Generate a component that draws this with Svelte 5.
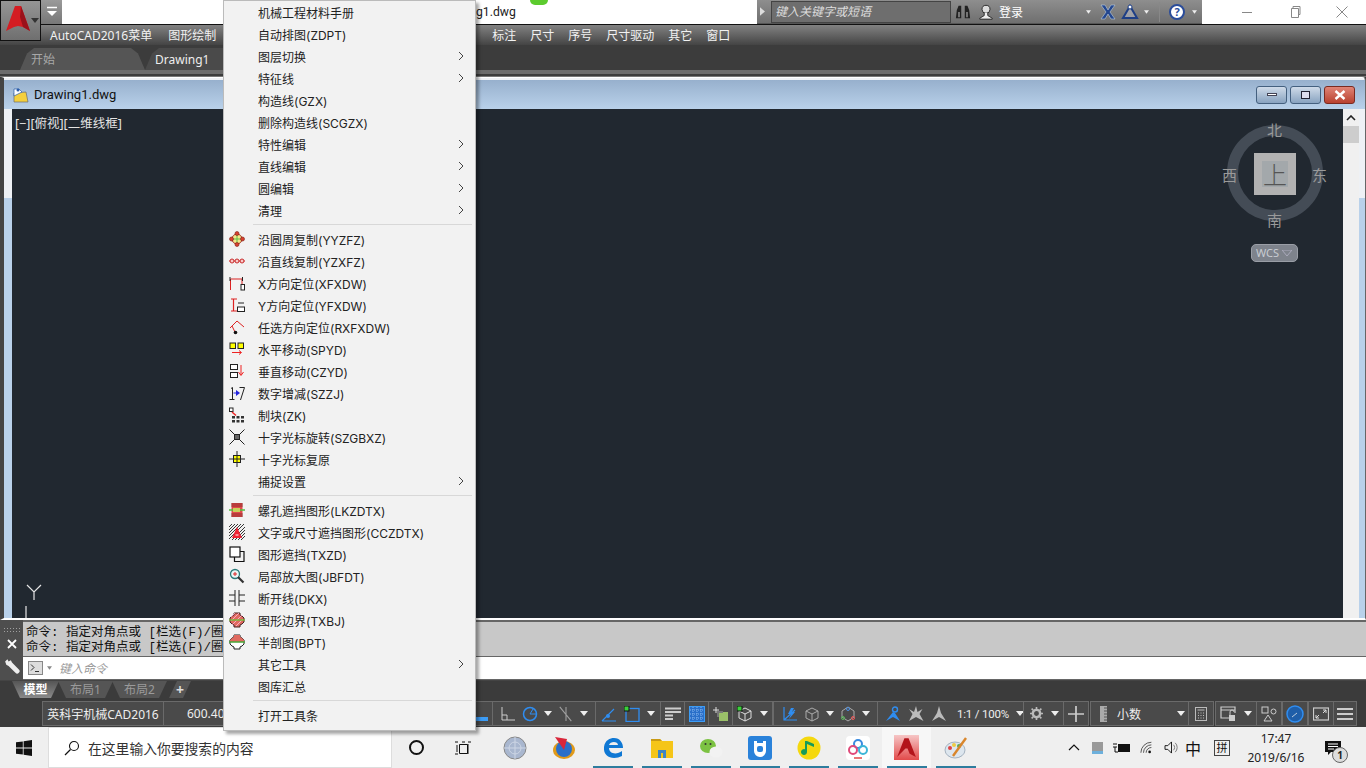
<script>
  const sep = { sep: true };
  const octa = 'M5 1h6v2l2 1 2 2v4l-2 2-2 1v2H5v-2l-2-1-2-2V6l2-2 2-1z';
  const icons = {
    yy: '<circle cx="8" cy="8" r="5" fill="#f4e58a" stroke="#a9342a"/><path d="M8 4v8M4 8h8" stroke="#5cc04a"/><circle cx="8" cy="2.5" r="2" fill="#d8402f" stroke="#7a1d12" stroke-width=".6"/><circle cx="8" cy="13.5" r="2" fill="#d8402f" stroke="#7a1d12" stroke-width=".6"/><circle cx="2.5" cy="8" r="2" fill="#d8402f" stroke="#7a1d12" stroke-width=".6"/><circle cx="13.5" cy="8" r="2" fill="#d8402f" stroke="#7a1d12" stroke-width=".6"/>',
    yz: '<path d="M0 8h16" stroke="#d33"/><g fill="#f7caca" stroke="#c92a2a"><circle cx="3" cy="8" r="2"/><circle cx="8" cy="8" r="2"/><circle cx="13" cy="8" r="2"/></g>',
    xf: '<path d="M1.5 15V4M13 4v5M1.5 4H13" fill="none" stroke="#d22"/><path d="M1 2v4M13.5 2v4" stroke="#222"/><rect x="12" y="9.5" width="3.5" height="5.5" fill="#fff" stroke="#222"/>',
    yf: '<path d="M2 2h6M2 14h6M4.5 2v12" fill="none" stroke="#d22" stroke-width="1.2"/><path d="M9 6h6" stroke="#222"/><rect x="8.5" y="10" width="7" height="4.5" fill="#fff" stroke="#222"/>',
    rx: '<path d="M1 9l7-7 7 6M3 7l3 6" fill="none" stroke="#d22"/><circle cx="6.5" cy="13.5" r="1.8" fill="#111"/>',
    sp: '<rect x="1" y="2" width="5.5" height="5.5" fill="#ff0" stroke="#222"/><rect x="9" y="2" width="5.5" height="5.5" fill="#ff0" stroke="#222"/><path d="M3 11.5h9m-2-2l2.5 2-2.5 2" fill="none" stroke="#e22"/>',
    cz: '<rect x="1.5" y="1.5" width="7" height="5" fill="#fff" stroke="#222"/><rect x="1.5" y="9.5" width="7" height="5" fill="#fff" stroke="#222"/><path d="M12 2v10m-2.5-3l2.5 3.5 2.5-3.5" fill="none" stroke="#e22"/>',
    sz: '<path d="M2 3.5l1.5-1v12M.5 14.5h5M10.5 2.5h5L11.5 15" fill="none" stroke="#222"/><path d="M4.5 8h4" stroke="#22d"/><path d="M7 5l4 3-4 3z" fill="#22d"/>',
    zk: '<rect x=".5" y="1" width="3.5" height="3.5" fill="#fff" stroke="#222"/><path d="M3 5l4 3.5" stroke="#e22" stroke-width="1.5"/><g fill="#333"><rect x="3" y="9" width="3" height="2.5"/><rect x="7.5" y="9" width="3" height="2.5"/><rect x="12" y="9" width="3" height="2.5"/><rect x="3" y="13" width="3" height="2.5"/><rect x="7.5" y="13" width="3" height="2.5"/><rect x="12" y="13" width="3" height="2.5"/></g>',
    gb: '<path d="M.5 .5l15 15M15.5 .5l-15 15" stroke="#222"/><rect x="5.5" y="5.5" width="5" height="5" fill="#666" stroke="#222"/>',
    gy: '<path d="M8 0v16M0 8h16" stroke="#222"/><rect x="4.5" y="4.5" width="7" height="7" fill="#ff0" stroke="#222"/><path d="M8 4v8M4 8h8" stroke="#222"/>',
    lk: '<rect x="2.5" y="1" width="11" height="14" fill="#e04b4b"/><path d="M2.5 2h11M2.5 4h11M2.5 12h11M2.5 14h11" stroke="#411" stroke-dasharray="1 1"/><path d="M0 8h16" stroke="#4fc040" stroke-width="1.5"/><rect x="4" y="6" width="7" height="4" fill="#c8d05a"/>',
    wz: '<path d="M0 3L3 0M0 6L6 0M0 9L9 0M0 12L12 0M0 15L15 0M3 16L16 3M6 16L16 6M9 16l7-7M12 16l4-4" stroke="#222" stroke-width=".9"/><path d="M8 3l5 11h-10z" fill="#e23"/><path d="M6.5 11h3" stroke="#fff"/>',
    tx: '<rect x="1" y="1" width="10" height="10" fill="#fff" stroke="#111" stroke-width="1.2"/><path d="M11 5.5h4v10H5.5V11" fill="none" stroke="#111" stroke-width="1.2"/>',
    jb: '<circle cx="6" cy="6" r="4.5" fill="#e8f6f6" stroke="#2a7a7a" stroke-width="1.3"/><path d="M4 6h4M6 4v4" stroke="#d22"/><path d="M9 9l5.500 5.500" stroke="#333" stroke-width="2.2"/>',
    dk: '<path d="M6 0v16M10 0v16M0 5h6M0 11h6M10 5h6M10 11h6" stroke="#222"/>',
    bj: `<path d="${octa}" fill="#e06a60" stroke="#422"/><path d="M2 5l4-4M2 9l8-8M3 13L13 3M7 14l7-7" stroke="#fbd" stroke-width=".8"/><path d="M0 8h16" stroke="#7ab93c" stroke-width="1.5"/>`,
    bp: `<path d="${octa}" fill="#fff" stroke="#222"/><path d="M5 1h6v2l2 1 2 2v2H1V6l2-2 2-1z" fill="#e06a60"/><path d="M0 8h16" stroke="#4aa83a" stroke-width="1.5"/>`
  };
  const menu = [
    { t: '机械工程材料手册' }, { t: '自动排图(ZDPT)' }, { t: '图层切换', sub: 1 }, { t: '特征线', sub: 1 },
    { t: '构造线(GZX)' }, { t: '删除构造线(SCGZX)' }, { t: '特性编辑', sub: 1 }, { t: '直线编辑', sub: 1 },
    { t: '圆编辑', sub: 1 }, { t: '清理', sub: 1 }, sep,
    { t: '沿圆周复制(YYZFZ)', i: 'yy' }, { t: '沿直线复制(YZXFZ)', i: 'yz' }, { t: 'X方向定位(XFXDW)', i: 'xf' },
    { t: 'Y方向定位(YFXDW)', i: 'yf' }, { t: '任选方向定位(RXFXDW)', i: 'rx' }, { t: '水平移动(SPYD)', i: 'sp' },
    { t: '垂直移动(CZYD)', i: 'cz' }, { t: '数字增减(SZZJ)', i: 'sz' }, { t: '制块(ZK)', i: 'zk' },
    { t: '十字光标旋转(SZGBXZ)', i: 'gb' }, { t: '十字光标复原', i: 'gy' }, { t: '捕捉设置', sub: 1 }, sep,
    { t: '螺孔遮挡图形(LKZDTX)', i: 'lk' }, { t: '文字或尺寸遮挡图形(CCZDTX)', i: 'wz' }, { t: '图形遮挡(TXZD)', i: 'tx' },
    { t: '局部放大图(JBFDT)', i: 'jb' }, { t: '断开线(DKX)', i: 'dk' }, { t: '图形边界(TXBJ)', i: 'bj' },
    { t: '半剖图(BPT)', i: 'bp' }, { t: '其它工具', sub: 1 }, { t: '图库汇总' }, sep, { t: '打开工具条' }
  ];
  const menuRight = ['标注', '尺寸', '序号', '尺寸驱动', '其它', '窗口'];
</script>

{#snippet arrow()}<svg class="drop" viewBox="0 0 8 5"><path d="M0 0h8L4 5z" fill="#eee"/></svg>{/snippet}

<div class="app">
  <div class="titlebar">
    <div class="qat-space"></div>
    <div class="qat">
      <svg viewBox="0 0 12 12" class="i12"><path d="M1 1.500h10" stroke="#fff" stroke-width="1.500"/><path d="M1 5h10L6 10z" fill="#fff"/></svg>
    </div>
    <div class="doc-name">g1.dwg</div>
    <div class="notice"></div>
    <div class="info">
      <svg viewBox="0 0 6 10" class="chev"><path d="M0 0l6 5-6 5z" fill="#ddd"/></svg>
      <div class="search">键入关键字或短语</div>
      <svg viewBox="0 0 18 18" class="bin"><path d="M2 7l2-5h3v14H1zM16 7l-2-5h-3v14h6z" fill="#222"/><path d="M4 9h1v6H4zM13 9h1v6h-1z" fill="#ddd"/></svg>
      <svg viewBox="0 0 18 18" class="usr"><circle cx="9" cy="6" r="4.500" fill="#ddd" stroke="#222"/><path d="M7 10v3l-5 3v1h14v-1l-5-3v-3" fill="#eee" stroke="#222"/></svg>
      <span class="login">登录</span>
      <svg class="tiny t1" viewBox="0 0 6 4"><path d="M0 0h6L3 4z" fill="#eee"/></svg>
      <svg viewBox="0 0 18 18" class="xi"><path d="M2 2h4l3 5 3-5h4l-5 7 5 7h-4l-3-5-3 5H2l5-7z" fill="#24478f" stroke="#bcd" stroke-width=".6"/></svg>
      <svg viewBox="0 0 18 18" class="tri"><path d="M9 3l7 12H2z" fill="#d6dcea" fill-opacity=".4" stroke="#1e3f86" stroke-width="2"/><circle cx="9" cy="4" r="2" fill="#fff" stroke="#1e3f86"/></svg>
      <svg class="tiny t2" viewBox="0 0 6 4"><path d="M0 0h6L3 4z" fill="#eee"/></svg>
      <span class="vline"></span>
      <span class="help">?</span>
      <svg class="tiny t3" viewBox="0 0 6 4"><path d="M0 0h6L3 4z" fill="#eee"/></svg>
    </div>
    <div class="win">
      <svg viewBox="0 0 12 12" class="i12"><path d="M1 6.500h10" stroke="#888"/></svg>
      <svg viewBox="0 0 12 12" class="i12"><path d="M2.500 2.500h7v9h-7zM4 2.500V.5h7v8H9.500" fill="none" stroke="#888"/></svg>
      <svg viewBox="0 0 12 12" class="i12"><path d="M.5.5l11 11M11.500.5l-11 11" stroke="#888"/></svg>
    </div>
  </div>

  <div class="menubar">
    <span class="m first">AutoCAD2016菜单</span><span class="m">图形绘制</span>
    <span class="menu-gap"></span>
    {#each menuRight as m}<span class="m">{m}</span>{/each}
  </div>

  <div class="tabs">
    <div class="tab start">开始</div>
    <div class="tab cur">Drawing1</div>
  </div>
  <div class="tab-rule"></div>

  <div class="doc">
    <div class="doc-title">
      <svg viewBox="0 0 16 16" class="doc-ico"><path d="M1 6l12-1 2 10H1z" fill="#f4cf3c" stroke="#6a6a6a" stroke-width=".7"/><path d="M1 2h5l3 3-8 4z" fill="#fff" stroke="#2a5caa" stroke-width=".7"/><circle cx="5" cy="3" r="1.500" fill="#2a5caa"/></svg>
      <span class="doc-text">Drawing1.dwg</span>
      <div class="doc-btns">
        <span class="wb"><i class="b-min"></i></span>
        <span class="wb"><i class="b-max"></i></span>
        <span class="wb close"><svg viewBox="0 0 12 10" class="bx"><path d="M1.500 1l9 8M10.500 1l-9 8" stroke="#fff" stroke-width="2.400"/></svg></span>
      </div>
    </div>
    <div class="doc-body">
      <div class="canvas">
        <div class="viewlabel">[−][俯视][二维线框]</div>
        <div class="cube">
          <div class="ring"></div>
          <div class="face"><span>上</span></div>
          <span class="dir nn">北</span><span class="dir ss">南</span><span class="dir ww">西</span><span class="dir ee">东</span>
          <div class="wcs">WCS <svg viewBox="0 0 10 6" class="wcs-a"><path d="M0 0h10L5 6z" fill="none" stroke="#aab"/></svg></div>
        </div>
        <svg class="ucs" viewBox="0 0 26 34"><path d="M3 1l7 7 7-7M10 8v8M2 22v12" fill="none" stroke="#e6e6e6" stroke-width="1.200"/></svg>
      </div>
      <div class="scroll">
        <svg viewBox="0 0 10 6" class="up"><path d="M1 5l4-4 4 4" fill="none" stroke="#222" stroke-width="1.600"/></svg>
        <div class="thumb"></div>
      </div>
    </div>
  </div>

  <div class="cmd">
    <div class="cmd-side">
      <div class="grip"></div>
      <svg viewBox="0 0 10 10" class="cmd-x"><path d="M1 1l8 8M9 1l-8 8" stroke="#fff" stroke-width="1.800"/></svg>
      <svg viewBox="0 0 14 14" class="cmd-w"><path d="M1 3l2-2 1 2 2-1 1 2 6 6a1.500 1.500 0 0 1-3 3L4 7 2 6z" fill="#eee"/></svg>
    </div>
    <div class="cmd-main">
      <div class="cmd-lines">
        <div>命令: 指定对角点或 [栏选(F)/圈</div>
        <div>命令: 指定对角点或 [栏选(F)/圈</div>
      </div>
      <div class="cmd-input">
        <svg viewBox="0 0 15 14" class="prompt"><rect x=".5" y=".5" width="14" height="13" fill="#ddd" stroke="#888"/><path d="M3 3.500l3 3-3 3M7 10.500h4" fill="none" stroke="#333"/></svg>
        <svg viewBox="0 0 6 4" class="tiny g"><path d="M0 0h6L3 4z" fill="#888"/></svg>
        <span class="ph">键入命令</span>
      </div>
    </div>
  </div>

  <div class="layouts">
    <span class="lt on">模型</span><span class="lt">布局1</span><span class="lt">布局2</span><span class="lt plus">+</span>
  </div>

  <div class="status">
    <div class="cell c-name">英科宇机械CAD2016</div>
    <div class="cell c-coord">600.40</div>
    <div class="cell c-a"><svg viewBox="0 0 16 16" class="s"><path d="M2 13h12" stroke="#3c9cf5" stroke-width="4"/></svg></div>
    <div class="cell c-b">
      <svg viewBox="0 0 16 16" class="s"><path d="M2 1v13h13M2 9h5v5" fill="none" stroke="#ccc"/></svg>
      <svg viewBox="0 0 16 16" class="s"><circle cx="8" cy="8" r="6.500" fill="none" stroke="#2f8df0" stroke-width="1.500"/><path d="M8 8h7M8 8l3-5" stroke="#2f8df0"/></svg>
      {@render arrow()}
      <svg viewBox="0 0 18 18" class="s"><path d="M2 1l13 16M9 1v16" stroke="#a0a0a0" stroke-width="1.200"/></svg>
      {@render arrow()}
    </div>
    <div class="cell c-c">
      <svg viewBox="0 0 16 16" class="s"><path d="M1 15h14M1 15L13 3" fill="none" stroke="#2f8df0" stroke-width="1.200"/><circle cx="7" cy="10" r="2" fill="#2f8df0"/></svg>
      <svg viewBox="0 0 16 16" class="s"><rect x="2" y="2.500" width="13" height="13" fill="none" stroke="#2f8df0" stroke-width="1.300"/><rect x="0" y="0" width="5" height="5" fill="#3bd13b" stroke="#111"/></svg>
      {@render arrow()}
    </div>
    <div class="cell c-w"><svg viewBox="0 0 16 14" class="s"><path d="M0 1.500h16M0 5h16M0 8.500h8M0 12h8" stroke="#ccc" stroke-width="2"/></svg></div>
    <div class="cell c-w"><svg viewBox="0 0 16 16" class="s"><rect x=".5" y=".5" width="15" height="15" fill="#2a6fc9" stroke="#3c9cf5"/><path d="M1 4h14M1 8h14M1 12h14M4 1v14M8 1v14M12 1v14" stroke="#86b7ee" stroke-dasharray="1 1"/></svg></div>
    <div class="cell c-w"><svg viewBox="0 0 16 16" class="s"><path d="M3 1v6M0 4h6" stroke="#ddd"/><rect x="6" y="6" width="9" height="9" fill="#9ac069"/><path d="M4 5h6v2H6v4H4z" fill="#777"/></svg></div>
    <div class="cell c-d">
      <svg viewBox="0 0 16 16" class="s"><path d="M8 2l6 3v7l-6 3-6-3V5zM2 5l6 3 6-3M8 8v7" fill="none" stroke="#ddd"/><rect x="0" y="0" width="5" height="5" fill="#3bd13b" stroke="#111"/></svg>
      {@render arrow()}
    </div>
    <div class="cell c-e">
      <svg viewBox="0 0 16 16" class="s"><path d="M2 1v13h13M2 14L13 4" fill="none" stroke="#2f8df0" stroke-width="1.200"/><path d="M9 2L6 8h3l-2 5 6-7h-3l2-4z" fill="#2f8df0"/></svg>
      <svg viewBox="0 0 16 16" class="s"><path d="M8 2l6 3v7l-6 3-6-3V5zM2 5l6 3 6-3M8 8v7" fill="none" stroke="#aaa"/></svg>
      {@render arrow()}
      <svg viewBox="0 0 16 16" class="s"><path d="M8 1l6 4v6l-6 4-6-4V5z" fill="none" stroke="#aaa"/><circle cx="8" cy="3" r="1.500" fill="none" stroke="#4a90e2"/><circle cx="3" cy="12" r="1.500" fill="none" stroke="#5b5"/><circle cx="13" cy="12" r="1.500" fill="none" stroke="#e55"/></svg>
      {@render arrow()}
    </div>
    <div class="cell c-f">
      <svg viewBox="0 0 16 16" class="s"><circle cx="10" cy="3.500" r="2.500" fill="none" stroke="#2f8df0" stroke-width="1.400"/><path d="M8 6L1 15l7-4 7 4-5-8z" fill="#2f8df0"/></svg>
      <svg viewBox="0 0 16 16" class="s"><path d="M8 0l1.500 6 5-3-3 5 4 7-7.500-4-7 4 3.500-7L1 3l5 3z" fill="#bbb"/></svg>
      <svg viewBox="0 0 16 16" class="s"><path d="M8 0l2 7 5 8-7-4-7 4 5-8z" fill="#bbb"/></svg>
      <span class="scale">1:1 / 100%</span>
      {@render arrow()}
    </div>
    <div class="cell c-g">
      <svg viewBox="0 0 16 16" class="gear"><circle cx="8" cy="8" r="4.500" fill="none" stroke="#bbb" stroke-width="3"/><path d="M8 0v3M8 13v3M0 8h3M13 8h3M2 2l2 2M12 12l2 2M14 2l-2 2M2 14l2-2" stroke="#bbb" stroke-width="2"/></svg>
      {@render arrow()}
    </div>
    <div class="cell c-h"><svg viewBox="0 0 14 14" class="s"><path d="M7 0v14M0 7h14" stroke="#ccc" stroke-width="1.500"/></svg></div>
    <div class="cell c-i">
      <svg viewBox="0 0 8 16" class="ruler"><path d="M0 0h7v16H0z" fill="#aaa"/><path d="M4 2h3M4 5h3M4 8h3M4 11h3M4 14h3" stroke="#555"/></svg>
      <span class="dec">小数</span>
      {@render arrow()}
    </div>
    <div class="cell c-j"><svg viewBox="0 0 12 14" class="s12"><rect x=".5" y=".5" width="11" height="13" fill="none" stroke="#bbb"/><path d="M2.500 3h7M3 6h1M5.500 6h1M8 6h1M3 8.500h1M5.500 8.500h1M8 8.500h1M3 11h1M5.500 11h1M8 11h1" stroke="#bbb"/></svg></div>
    <div class="cell c-k">
      <svg viewBox="0 0 18 16" class="s18"><path d="M12 12H1V1h14v6M1 4h14" fill="none" stroke="#ccc" stroke-width="1.200"/><rect x="9" y="9" width="6" height="6" fill="#ccc"/><path d="M10 9V6a2 2 0 0 1 4 0" fill="none" stroke="#ccc"/></svg>
      {@render arrow()}
    </div>
    <div class="cell c-l"><svg viewBox="0 0 16 16" class="s"><rect x="1" y="1" width="6" height="6" fill="none" stroke="#ccc"/><circle cx="12.500" cy="5.500" r="2.500" fill="none" stroke="#ccc"/><path d="M7 9l4 6H3z" fill="none" stroke="#ccc"/></svg></div>
    <div class="cell c-m"><svg viewBox="0 0 18 18" class="s18b"><circle cx="9" cy="9" r="8" fill="#1f5ea8" stroke="#2f8df0" stroke-width="1.500"/><path d="M6 12l5-4" stroke="#bcd"/></svg></div>
    <div class="cell c-n">
      <svg viewBox="0 0 16 14" class="s"><rect x=".5" y="1" width="15" height="12" fill="none" stroke="#ccc" stroke-width="1.200"/><path d="M3 11l3-3M3 8v3h3M13 3l-3 3M10 3h3v3" fill="none" stroke="#ddd"/></svg>
    </div>
    <div class="cell c-o"><svg viewBox="0 0 16 14" class="s"><path d="M0 2h16M0 7h16M0 12h16" stroke="#ccc" stroke-width="1.800"/></svg></div>
  </div>

  <div class="taskbar">
    <svg viewBox="0 0 16 16" class="winlogo"><path d="M0 2.300l6.800-.9v6.200H0zM7.600 1.300L16 0v7.600H7.600zM0 8.400h6.800v6.200L0 13.700zM7.600 8.400H16V16l-8.400-1.200z" fill="#111"/></svg>
    <div class="tsearch">
      <svg viewBox="0 0 16 16" class="mag"><circle cx="10" cy="6" r="4.500" fill="none" stroke="#111" stroke-width="1.100"/><path d="M6.500 9.500L1 15" stroke="#111" stroke-width="1.200"/></svg>
      <span>在这里输入你要搜索的内容</span>
    </div>
    <div class="tb"><span class="cortana"></span></div>
    <div class="tb"><svg viewBox="0 0 16 14" class="tv"><path d="M0 1h3M7 1h3M13 1h3M0 13h3M4.500 3.500h8v9h-8zM13 3v10M2 4v7" fill="none" stroke="#111"/></svg></div>
    <div class="tb"><svg viewBox="0 0 24 24" class="t24"><circle cx="12" cy="12" r="11" fill="#a9b7cf" stroke="#888"/><circle cx="12" cy="12" r="6" fill="none" stroke="#cdd6e5"/><path d="M1 12h22M12 1v22" stroke="#cdd6e5"/></svg></div>
    <div class="tb"><svg viewBox="0 0 24 24" class="t24"><ellipse cx="12" cy="14" rx="11" ry="9" fill="#e09a1a"/><circle cx="12" cy="13" r="8" fill="#2a6fc9"/><path d="M3 1l12 2-3 11z" fill="#d9263a"/></svg></div>
    <div class="tb run"><svg viewBox="0 0 24 24" class="t24"><path d="M3 11C4 4 9 2 13 2c6 0 9 5 9 10H8c0 6 8 7 13 3v5c-8 4-19 2-18-9zM8 9h9c0-4-8-4-9 0z" fill="#0f78d4"/></svg></div>
    <div class="tb run"><svg viewBox="0 0 24 24" class="t24"><path d="M1 3h9l2 2h11v17H1z" fill="#f5c518"/><path d="M1 3h9l2 2H1z" fill="#c99a14"/><path d="M8 14h8v8h-3v-5h-2v5H8z" fill="#3f85c4"/></svg></div>
    <div class="tb run"><svg viewBox="0 0 24 24" class="t24"><ellipse cx="9" cy="10" rx="8" ry="7" fill="#7cc242"/><ellipse cx="17" cy="16" rx="6.500" ry="5.500" fill="#f2f2f2"/><circle cx="6.500" cy="8" r="1" fill="#333"/><circle cx="11.500" cy="8" r="1" fill="#333"/></svg></div>
    <div class="tb run"><svg viewBox="0 0 24 24" class="t24"><rect width="24" height="24" rx="3" fill="#2a82da"/><path d="M6 5v10a6 6 0 0 0 12 0V5h-3v2H9V5z" fill="#fff"/><rect x="9" y="10" width="6" height="6" rx="2" fill="#2a82da"/></svg></div>
    <div class="tb run"><svg viewBox="0 0 24 24" class="t24"><circle cx="12" cy="12" r="11.500" fill="#f5d80e"/><path d="M10 5v11a3 3 0 1 1-2-2.800V5zM10 5l7 3v3l-7-3z" fill="#169b59"/></svg></div>
    <div class="tb run"><svg viewBox="0 0 24 24" class="t24"><rect width="24" height="24" rx="4" fill="#fff"/><circle cx="12" cy="8" r="4" fill="none" stroke="#3a8be0" stroke-width="2"/><circle cx="7" cy="14" r="4" fill="none" stroke="#e04a7a" stroke-width="2"/><circle cx="17" cy="14" r="4" fill="none" stroke="#3cb6d8" stroke-width="2"/><path d="M8 22h8" stroke="#e04a4a" stroke-width="1.500"/></svg></div>
    <div class="tb run active"><svg viewBox="0 0 24 24" class="t24b"><defs><linearGradient id="ag" x1="0" y1="0" x2="0" y2="1"><stop offset="0" stop-color="#f6c6c6"/><stop offset="1" stop-color="#e24a4a"/></linearGradient></defs><rect width="24" height="24" fill="url(#ag)"/><path d="M10 3h4l7 18-6-3-2-5h-2L3 21z" fill="#b3141b"/></svg></div>
    <div class="tb run"><svg viewBox="0 0 24 24" class="t24"><ellipse cx="11" cy="14" rx="10" ry="8" fill="#dde6ee" stroke="#89a" stroke-width=".7"/><circle cx="6" cy="12" r="2" fill="#d44"/><circle cx="10" cy="9" r="2" fill="#ec4"/><circle cx="15" cy="10" r="2" fill="#5a5"/><path d="M9 20L22 2" stroke="#d9862c" stroke-width="2.400"/></svg></div>

    <div class="tray">
      <svg viewBox="0 0 12 7" class="caret"><path d="M1 6l5-5 5 5" fill="none" stroke="#111" stroke-width="1.200"/></svg>
      <span class="tbox"></span>
      <svg viewBox="0 0 18 12" class="batt"><rect x="5" y="2" width="12" height="8" fill="#111"/><path d="M0 2h4M0 5h4M2 5v5h3" fill="none" stroke="#111"/></svg>
      <svg viewBox="0 0 16 14" class="wifi"><path d="M1 13a12 12 0 0 1 12-12M4 13a9 9 0 0 1 9-9M7 13a6 6 0 0 1 6-6" fill="none" stroke="#444"/><circle cx="11" cy="12" r="1.500" fill="#111"/></svg>
      <svg viewBox="0 0 16 14" class="vol"><path d="M1 5h3l4-4v12l-4-4H1z" fill="none" stroke="#111"/><path d="M10 4a4 4 0 0 1 0 6M12 2a7 7 0 0 1 0 10" fill="none" stroke="#777"/></svg>
      <span class="ime">中</span>
      <span class="pin">拼</span>
      <div class="clock"><div>17:47</div><div>2019/6/16</div></div>
      <div class="notif">
        <svg viewBox="0 0 16 14" class="s"><path d="M0 0h16v11H6l-3 3v-3H0z" fill="#111"/><path d="M3 3h10M3 5.500h10M3 8h6" stroke="#fff"/></svg>
        <span class="badge">1</span>
      </div>
    </div>
  </div>

  <div class="logo">
    <svg viewBox="0 0 28 28" class="logo-a"><path d="M11 2h6l9 25-7-4-5-1-4 1-8 4z" fill="#d41c22"/><path d="M17 2l9 25-7-4-3-10z" fill="#9a111a"/></svg>
    <svg viewBox="0 0 8 5" class="logo-d"><path d="M0 0h8L4 5z" fill="#333"/></svg>
  </div>

  <div class="ctx">
    {#each menu as m}
      {#if m.sep}
        <div class="ctx-sep"></div>
      {:else}
        <div class="ctx-i">
          <span class="ctx-ico">{#if m.i}<svg viewBox="0 0 16 16" class="s">{@html icons[m.i]}</svg>{/if}</span>
          <span class="ctx-t">{m.t}</span>
          {#if m.sub}<svg viewBox="0 0 6 10" class="ctx-a"><path d="M1 1l4 4-4 4" fill="none" stroke="#444"/></svg>{/if}
        </div>
      {/if}
    {/each}
  </div>
</div>

<style>
  :global(body) { margin: 0; overflow: hidden; }
  .app { position: relative; width: 1366px; height: 768px; overflow: hidden; display: flex; flex-direction: column; background: #3b3b3b; font-family: "Noto Sans", "Noto Sans CJK SC", sans-serif; font-size: 12px; }
  svg { display: block; flex: none; }
  .s { width: 16px; height: 16px; }
  .s12 { width: 12px; height: 14px; }
  .s18 { width: 18px; height: 16px; }
  .s18b { width: 18px; height: 18px; }
  .i12 { width: 12px; height: 12px; }
  .drop { width: 8px; height: 5px; }
  .tiny { width: 5px; height: 4px; }

  .titlebar { height: 24px; flex: none; background: #fff; display: flex; align-items: stretch; }
  .qat-space { width: 41px; }
  .qat { width: 21px; background: linear-gradient(#9a9a9a, #777); display: flex; align-items: center; justify-content: center; }
  .doc-name { margin-left: 414px; width: 47px; font-family: Roboto, sans-serif; font-size: 12.200px; line-height: 24px; color: #222; white-space: nowrap; }
  .notice { width: 18px; height: 5px; margin-left: 7px; border-radius: 0 0 9px 9px; background: #5ccb2e; }
  .info { margin-left: 209px; width: 445px; box-sizing: border-box; height: 24px; background: linear-gradient(#8e8e8e, #6f6f6f); border-bottom: 1px solid #555; display: flex; align-items: center; padding-left: 3px; }
  .chev { width: 5px; height: 9px; margin-right: 6px; }
  .search { width: 180px; height: 22px; box-sizing: border-box; background: #6e6e6e; border: 1px solid #444; font-style: italic; color: #ddd; line-height: 20px; padding-left: 3px; font-size: 12px; margin-right: 4px; }
  .bin { width: 16px; height: 18px; margin-right: 7px; }
  .usr { width: 16px; height: 18px; margin-right: 5px; }
  .login { color: #fff; font-size: 12px; width: 84px; }
  .t1 { margin: 0 8px 0 3px; }
  .xi { width: 18px; height: 18px; margin-right: 3px; }
  .tri { width: 20px; height: 18px; margin-right: 4px; }
  .vline { width: 1px; height: 20px; background: #888; margin: 0 9px 0 10px; }
  .help { width: 16px; height: 16px; box-sizing: border-box; border-radius: 50%; background: #fff; border: 2px solid #2a4c9a; color: #2a4c9a; font-weight: 700; font-size: 11px; line-height: 12px; text-align: center; margin-right: 7px; }
  .win { flex: 1; display: flex; align-items: center; justify-content: space-between; padding: 0 18px 0 39px; }

  .menubar { height: 21px; flex: none; display: flex; align-items: center; gap: 14px; padding-left: 50px; border-top: 1px solid #111; box-sizing: border-box; background: linear-gradient(#828282, #444); color: #f2f2f2; font-size: 12px; }
  .m { white-space: nowrap; }
  .first { margin-right: 2px; }
  .menu-gap { width: 248px; }

  .tabs { height: 25px; flex: none; display: flex; align-items: flex-end; padding-left: 20px; background: #3c3c3c; box-sizing: border-box; }
  .tab { height: 22px; line-height: 24px; box-sizing: border-box; clip-path: polygon(0 100%, 7px 25%, 14px 0, calc(100% - 14px) 0, calc(100% - 7px) 25%, 100% 100%); }
  .start { width: 125px; background: #555; color: #a8a8a8; padding-left: 11px; }
  .cur { width: 130px; background: #4a4a4a; color: #eee; padding-left: 10px; }
  .tab-rule { height: 7px; flex: none; background: linear-gradient(#6c6c6c 0 4px, #3c3c3c 4px 6px, #777 6px); }

  .doc { flex: 1; min-height: 0; display: flex; flex-direction: column; box-sizing: border-box; background: linear-gradient(#eef1f5 0 120px, #b9d1ea 120px); border-top: 1px solid #fff; border-left: 4px solid #444; border-right: 1px solid #666; border-bottom: 2px solid #fff; padding: 0 6px 0 8px; position: relative; border-radius: 4px 4px 0 0; }
  .doc-title { height: 29px; flex: none; margin: 2px -6px 0 -8px; padding: 0 6px 0 9px; background: linear-gradient(#97b0cd, #b9d1ea); display: flex; align-items: center; }
  .doc-ico { width: 16px; height: 16px; margin-right: 5px; }
  .doc-text { font-family: Roboto, sans-serif; font-size: 13px; color: #111; }
  .doc-btns { margin-left: auto; display: flex; gap: 3px; padding-right: 4px; }
  .wb { width: 31px; height: 18px; box-sizing: border-box; border: 1px solid #44607f; border-radius: 3px; background: linear-gradient(#cfdbe9, #88a3c0); display: flex; align-items: center; justify-content: center; }
  .close { background: linear-gradient(#e08476, #b8412f); border-color: #7a2a20; }
  .b-min { display: block; width: 10px; height: 3px; background: #fff; border: 1px solid #445; box-sizing: border-box; }
  .b-max { display: block; width: 9px; height: 8px; border: 1px solid #223; box-sizing: border-box; background: #dde; }
  .bx { width: 12px; height: 10px; }
  .doc-body { flex: 1; min-height: 0; display: flex; }
  .canvas { flex: 1; position: relative; background: #212830; }
  .viewlabel { position: absolute; left: 3px; top: 4px; color: #e4e4e4; font-size: 12.500px; }
  .cube { position: absolute; left: 1215px; top: 16px; width: 100px; height: 136px; }
  .ring { position: absolute; left: 0; top: 0; width: 96px; height: 96px; box-sizing: border-box; border: 11px solid #444c56; border-radius: 50%; }
  .face { position: absolute; left: 27px; top: 28px; width: 42px; height: 42px; background: #b2b2b2; display: flex; align-items: center; justify-content: center; }
  .face span { width: 26px; height: 26px; background: #a3a8ab; color: #555; font-size: 24px; line-height: 26px; text-align: center; font-family: "Noto Sans CJK SC", sans-serif; font-weight: 300; }
  .dir { position: absolute; color: #9a9a9a; font-size: 15px; line-height: 16px; font-family: "Noto Sans CJK SC", sans-serif; }
  .nn { left: 40px; top: -3px; }
  .ss { left: 40px; top: 87px; }
  .ww { left: -5px; top: 42px; }
  .ee { left: 85px; top: 42px; }
  .wcs { position: absolute; left: 24px; top: 119px; width: 47px; height: 18px; box-sizing: border-box; background: #7e838c; border: 1px solid #9a9ea6; border-radius: 5px; color: #c8ccd2; font-size: 11px; line-height: 16px; padding-left: 4px; display: flex; align-items: center; gap: 3px; }
  .wcs-a { width: 10px; height: 6px; }
  .ucs { position: absolute; left: 12px; bottom: 0; width: 26px; height: 34px; }
  .scroll { width: 16px; flex: none; background: #f0f0f0; box-sizing: border-box; }
  .up { width: 10px; height: 6px; margin: 6px auto 5px; }
  .thumb { height: 17px; background: #cdcdcd; }

  .cmd { height: 60px; flex: none; display: flex; background: #666; }
  .cmd-side { width: 23px; flex: none; background: #4e4e4e; display: flex; flex-direction: column; align-items: center; }
  .grip { width: 18px; height: 6px; margin-top: 7px; background-image: radial-gradient(#a0a0a0 .8px, transparent 1px); background-size: 3px 3px; }
  .cmd-x { width: 10px; height: 10px; margin-top: 6px; }
  .cmd-w { width: 16px; height: 16px; margin-top: 9px; }
  .cmd-main { flex: 1; display: flex; flex-direction: column; padding-top: 2px; }
  .cmd-lines { height: 34px; background: #c8c8c8; font-family: "Liberation Mono", "Noto Sans CJK SC", monospace; font-size: 12.500px; line-height: 15px; color: #111; padding: 4px 0 0 3px; box-sizing: border-box; white-space: nowrap; }
  .cmd-input { margin-top: 1px; height: 22px; background: #fff; display: flex; align-items: center; padding-left: 5px; gap: 4px; }
  .prompt { width: 15px; height: 14px; }
  .ph { font-style: italic; color: #999; margin-left: 3px; }
  .layouts { height: 20px; flex: none; display: flex; padding-left: 12px; background: #3b3b3b; border-top: 1px solid #444; box-sizing: border-box; }
  .lt { height: 17px; width: 55px; box-sizing: border-box; line-height: 17px; color: #9a9a9a; text-align: center; background: #555; clip-path: polygon(0 0, 100% 0, calc(100% - 8px) 100%, 8px 100%); margin-right: -1px; }
  .on { width: 47px; background: linear-gradient(#555, #8a8a8a); color: #fff; font-weight: 700; }
  .plus { width: 22px; color: #ddd; font-size: 14px; font-weight: 700; margin-left: 3px; clip-path: polygon(8px 0, 100% 0, calc(100% - 8px) 100%, 0 100%); }

  .status { height: 27px; flex: none; display: flex; padding: 1px 0 1px 42px; box-sizing: border-box; background: #3b3b3b; }
  .cell { box-sizing: border-box; border: 1px solid #6a6a6a; margin-right: -1px; background: #4a4a4a; color: #eee; display: flex; align-items: center; justify-content: center; gap: 6px; white-space: nowrap; overflow: hidden; flex: none; }
  .c-name { width: 122px; }
  .c-coord { width: 308px; justify-content: flex-start; padding-left: 23px; }
  .c-a { width: 23px; } .c-b { width: 104px; } .c-c { width: 66px; gap: 7px; }
  .c-w { width: 25px; } .c-d { width: 41px; gap: 7px; }
  .c-e { width: 105px; margin-left: 1px; }
  .c-f { width: 147px; gap: 7px; justify-content: flex-start; padding-left: 7px; }
  .scale { color: #eee; font-family: Roboto, sans-serif; font-size: 11.500px; letter-spacing: -.2px; margin-left: 3px; }
  .c-g { width: 41px; gap: 8px; justify-content: flex-start; padding-left: 6px; }
  .gear { width: 13px; height: 13px; }
  .c-h { width: 26px; }
  .c-i { width: 99px; margin-left: 2px; gap: 0; justify-content: flex-start; padding-left: 9px; }
  .ruler { width: 8px; height: 16px; margin-right: 9px; }
  .dec { width: 60px; font-size: 12px; }
  .c-j { width: 26px; } .c-k { width: 42px; margin-left: 2px; } .c-l { width: 26px; }
  .c-m { width: 26px; margin-left: 1px; } .c-n { width: 26px; margin-left: 1px; } .c-o { width: 24px; }

  .taskbar { height: 41px; flex: none; display: flex; align-items: center; background: #efefef; padding-left: 16px; }
  .winlogo { width: 16px; height: 16px; margin-right: 16px; }
  .tsearch { width: 344px; height: 41px; box-sizing: border-box; background: #fff; border: 1px solid #ddd; display: flex; align-items: center; padding-left: 15px; gap: 8px; font-size: 13.800px; color: #333; }
  .mag { width: 16px; height: 16px; }
  .tb { width: 49px; height: 41px; display: flex; align-items: center; justify-content: center; box-sizing: border-box; flex: none; }
  .cortana { width: 11px; height: 11px; border: 2px solid #111; border-radius: 50%; }
  .tv { width: 16px; height: 14px; margin-right: 6px; }
  .t24 { width: 24px; height: 24px; }
  .t24b { width: 25px; height: 25px; }
  .run { position: relative; }
  .run::after { content: ""; position: absolute; left: 5px; right: 4px; bottom: 0; height: 2px; background: #2e7d9e; }
  .active { background: #f7f7f7; }
  .tray { margin-left: auto; display: flex; align-items: center; height: 41px; }
  .caret { width: 12px; height: 7px; margin-right: 12px; }
  .tbox { width: 11px; height: 12px; background: linear-gradient(#999 75%, #6db0dc 75%); margin-right: 10px; }
  .batt { width: 18px; height: 12px; margin-right: 9px; }
  .wifi { width: 14px; height: 13px; margin-right: 10px; }
  .vol { width: 15px; height: 13px; margin-right: 6px; }
  .ime { font-size: 16px; color: #111; width: 29px; }
  .pin { width: 14px; height: 14px; border: 1px solid #444; font-size: 11px; line-height: 13px; text-align: center; color: #111; margin-right: 15px; }
  .clock { width: 62px; text-align: center; font-size: 12px; line-height: 19px; color: #222; margin-right: 18px; }
  .notif { position: relative; width: 41px; }
  .badge { position: absolute; left: 7px; top: 7px; width: 14px; height: 14px; border-radius: 50%; border: 1px solid #666; background: #ddd; font-size: 10px; line-height: 14px; text-align: center; font-weight: 700; color: #222; }

  .logo { position: absolute; left: 0; top: 0; width: 41px; height: 41px; box-sizing: border-box; border: 1px solid #111; background: linear-gradient(#959595, #6f6f6f); }
  .logo-a { position: absolute; left: 3px; top: 3px; width: 28px; height: 28px; }
  .logo-d { position: absolute; left: 30px; top: 17px; width: 8px; height: 5px; }

  .ctx { position: absolute; left: 223px; top: 0; width: 253px; height: 731px; box-sizing: border-box; padding: 0 3px 0 0; background: #f2f2f2; border: 1px solid #bbb; box-shadow: 3px 3px 3px rgba(0,0,0,.35); font-family: Inter, "Noto Sans CJK SC", sans-serif; }
  .ctx-i { height: 22px; display: flex; align-items: center; padding-left: 5px; color: #222; white-space: nowrap; }
  .ctx-ico { width: 29px; flex: none; }
  .ctx-t { flex: 1; }
  .ctx-a { width: 6px; height: 10px; margin-right: 8px; }
  .ctx-sep { height: 1px; margin: 3px 0 3px 29px; background: #d8d8d8; }
</style>
